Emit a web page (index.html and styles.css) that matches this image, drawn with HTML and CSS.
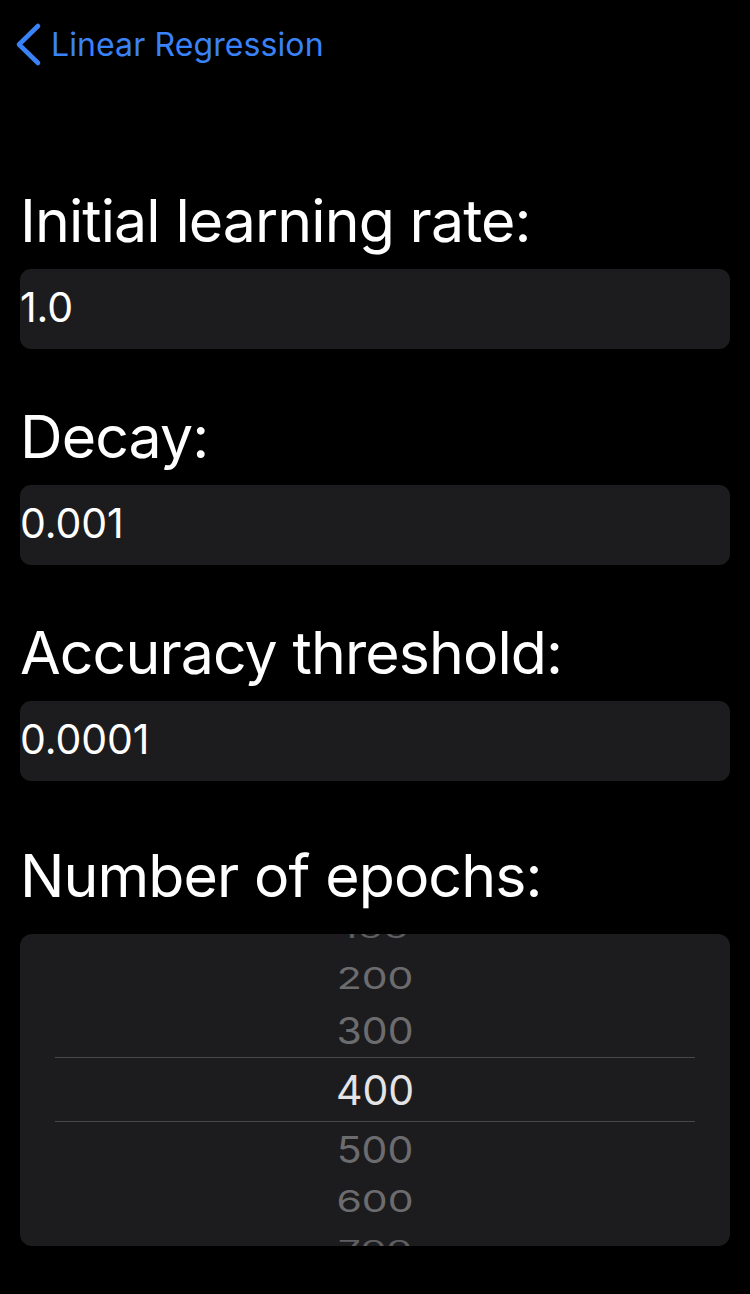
FILE: index.html
```html
<!DOCTYPE html>
<html lang="en">
<head>
<meta charset="utf-8">
<title>Linear Regression</title>
<link rel="stylesheet" href="styles.css">
</head>
<body>
<div class="screen">
  <nav class="navbar">
    <a class="back" href="#">
      <svg class="chevron" width="30" height="46" viewBox="0 0 30 46" aria-hidden="true">
        <path d="M24 5 L5 23.5 L24 42" fill="none" stroke="#3a82f7" stroke-width="4.6" stroke-linecap="round" stroke-linejoin="round"/>
      </svg>
      <span class="back-title">Linear Regression</span>
    </a>
  </nav>

  <main class="form">
    <section class="group">
      <h2 class="label">Initial learning rate:</h2>
      <div class="field">1.0</div>
    </section>
    <section class="group">
      <h2 class="label">Decay:</h2>
      <div class="field">0.001</div>
    </section>
    <section class="group">
      <h2 class="label">Accuracy threshold:</h2>
      <div class="field">0.0001</div>
    </section>
    <section class="group group-picker">
      <h2 class="label">Number of epochs:</h2>
      <div class="picker">
        <div class="sel-band"></div>
        <div class="wheel">
          <div class="row row-far"><span>100</span></div>
          <div class="row row-mid"><span>200</span></div>
          <div class="row row-near"><span>300</span></div>
          <div class="row row-sel"><span>400</span></div>
          <div class="row row-near"><span>500</span></div>
          <div class="row row-mid"><span>600</span></div>
          <div class="row row-far"><span>700</span></div>
        </div>
      </div>
    </section>
  </main>
</div>
</body>
</html>
```

FILE: styles.css
```css
* { box-sizing: border-box; }

html, body {
  margin: 0;
  padding: 0;
  background: #000;
}

body {
  font-family: Inter, "Noto Sans", "Liberation Sans", sans-serif;
  color: #fff;
  width: 750px;
  height: 1294px;
  overflow: hidden;
}

.screen {
  display: flex;
  flex-direction: column;
}

.navbar {
  height: 88px;
  display: flex;
  align-items: center;
  padding-left: 14px;
  padding-top: 2px;
}

.back {
  display: flex;
  align-items: center;
  gap: 7px;
  color: #3a82f7;
  text-decoration: none;
}

.chevron {
  display: block;
  margin-top: -2px;
}

.back-title {
  font-size: 32px;
  letter-spacing: 0.1px;
  line-height: 1;
}

.form {
  display: flex;
  flex-direction: column;
  gap: 52px;
  padding: 97px 20px 0;
}

.group {
  display: flex;
  flex-direction: column;
  gap: 12px;
}

.group-picker {
  margin-top: 7px;
  gap: 22px;
}

.label {
  margin: 0;
  font-size: 59px;
  font-weight: 400;
  line-height: 72px;
  letter-spacing: -0.9px;
  color: #fff;
}

.field {
  height: 80px;
  background: #1c1c1e;
  border-radius: 11px;
  display: flex;
  align-items: center;
  padding-bottom: 4px;
  font-size: 41px;
  color: #fff;
  letter-spacing: -0.1px;
}

.picker {
  position: relative;
  height: 312px;
  background: #1c1c1e;
  border-radius: 12px;
  overflow: hidden;
  display: flex;
  flex-direction: column;
  justify-content: center;
}

.sel-band {
  position: absolute;
  left: 35px;
  right: 35px;
  top: 123px;
  height: 65px;
  border-top: 1.5px solid #48484a;
  border-bottom: 1.5px solid #48484a;
}

.wheel {
  display: flex;
  flex-direction: column;
  flex-shrink: 0;
}

.row {
  display: flex;
  align-items: center;
  justify-content: center;
  font-size: 41px;
  line-height: 1;
  color: #6c6c6f;
  flex-shrink: 0;
}

.row span { display: block; }

.row-sel { height: 65px; color: #e4e4e6; }
.row-near { height: 54px; }
.row-near span { transform: scaleY(0.9); }
.row-mid { height: 50px; }
.row-mid span { transform: scaleY(0.74); }
.row-far { height: 46px; color: #5f5f62; }
.row-far span { transform: scaleY(0.55); }
```
